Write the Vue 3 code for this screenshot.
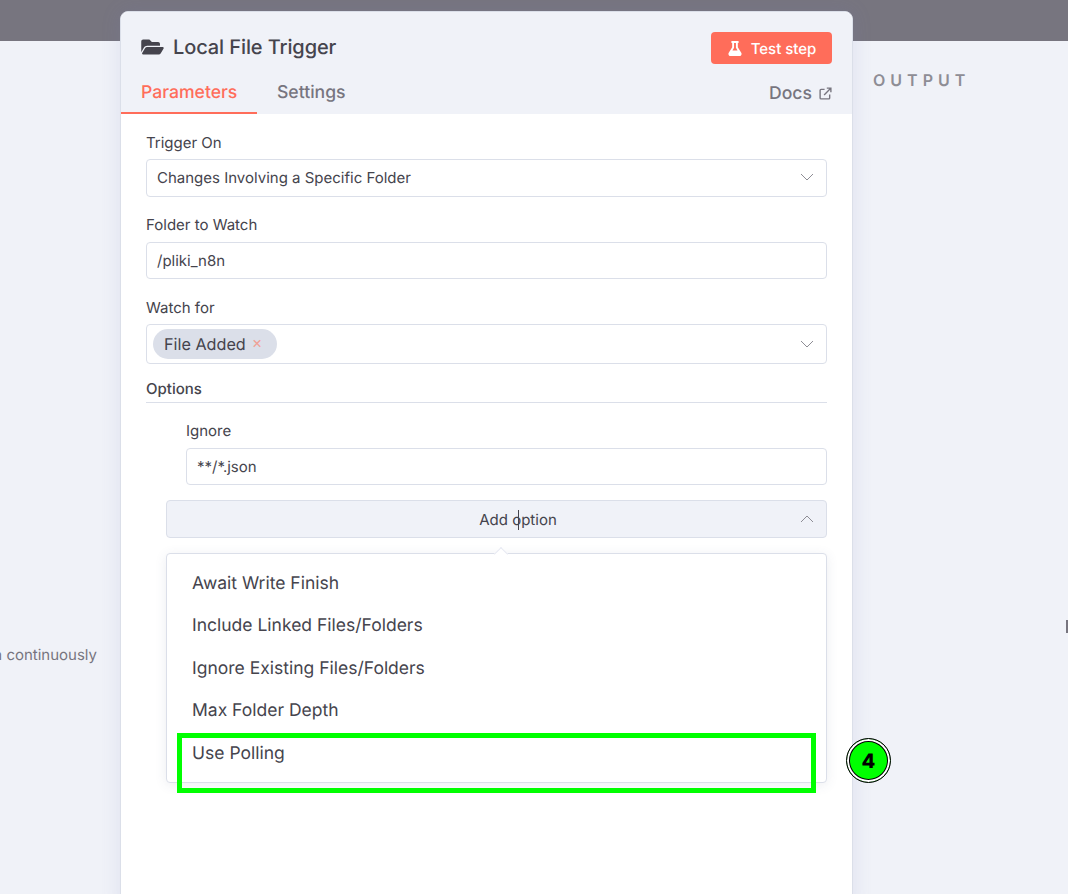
<template>
  <div class="page">
    <div class="topbar"></div>

    <div class="side side-left">
      <span class="hint">n continuously</span>
    </div>

    <div class="panel">
      <div class="panel-head">
        <div class="title-row">
          <div class="title">
            <svg class="folder" viewBox="0 0 576 512" fill="currentColor">
              <path d="M572.694 292.093L500.27 416.248A63.997 63.997 0 0 1 444.989 448H45.025c-18.523 0-30.064-20.093-20.731-36.093l72.424-124.155A64 64 0 0 1 152 256h399.964c18.523 0 30.064 20.093 20.73 36.093zM152 224h328v-48c0-26.51-21.49-48-48-48H272l-64-64H48C21.49 64 0 85.49 0 112v278.046l69.077-118.418C86.214 242.25 117.989 224 152 224z" />
            </svg>
            <span>Local File Trigger</span>
          </div>
          <button class="test-btn">
            <svg class="flask" viewBox="0 0 448 512" fill="currentColor">
              <path d="M437.2 403.5L320 215V64h8c13.3 0 24-10.7 24-24V24c0-13.3-10.7-24-24-24H120c-13.3 0-24 10.7-24 24v16c0 13.3 10.7 24 24 24h8v151L10.8 403.5C-18.5 450.6 15.3 512 70.9 512h306.2c55.7 0 89.4-61.5 60.1-108.5zM137.9 320l48.2-77.6c3.7-5.2 5.8-11.6 5.8-18.4V64h64v160c0 6.9 2.2 13.2 5.8 18.4l48.2 77.6h-172z" />
            </svg>
            Test step
          </button>
        </div>
        <div class="tabs">
          <div class="tab tab--active">Parameters</div>
          <div class="tab">Settings</div>
          <div class="docs">
            Docs
            <svg class="ext" viewBox="0 0 14 14" fill="none" stroke="currentColor" stroke-width="1.5">
              <path d="M6 2.5H2.2a1 1 0 0 0-1 1v8.3a1 1 0 0 0 1 1h8.3a1 1 0 0 0 1-1V8" />
              <path d="M5.5 8.5L12.6 1.4M8.4 1.2h4.4v4.4" />
            </svg>
          </div>
        </div>
      </div>

      <div class="panel-body">
        <label class="label l-trigger">Trigger On</label>
        <div class="field field--select f-trigger">
          <span>Changes Involving a Specific Folder</span>
          <svg class="chev" viewBox="0 0 14 8" fill="none" stroke="currentColor"><path d="M1 1l6 6 6-6" /></svg>
        </div>

        <label class="label l-folder">Folder to Watch</label>
        <div class="field f-folder">/pliki_n8n</div>

        <label class="label l-watch">Watch for</label>
        <div class="field field--select f-watch">
          <span class="tag">File Added <i class="tag-x">×</i></span>
          <svg class="chev" viewBox="0 0 14 8" fill="none" stroke="currentColor"><path d="M1 1l6 6 6-6" /></svg>
        </div>

        <div class="options-head">Options</div>

        <div class="option-block">
          <label class="label">Ignore</label>
          <div class="field f-folder">**/*.json</div>
        </div>

        <div class="add-option">
          <span>Add option</span>
          <svg class="chev chev--up" viewBox="0 0 14 8" fill="none" stroke="currentColor"><path d="M1 7l6-6 6 6" /></svg>
          <i class="caret-line"></i>
        </div>

        <div class="dropdown">
          <i class="arrow"></i>
          <div v-for="item in optionItems" :key="item" class="dd-item">{{ item }}</div>
        </div>
      </div>
    </div>

    <div class="side side-right">
      <div class="output">OUTPUT</div>
      <i class="edge-mark"></i>
    </div>

    <div class="highlight"></div>
    <div class="marker">4</div>
  </div>
</template>

<script setup>
const optionItems = [
  'Await Write Finish',
  'Include Linked Files/Folders',
  'Ignore Existing Files/Folders',
  'Max Folder Depth',
  'Use Polling',
]
</script>

<style>
html,
body {
  margin: 0;
  overflow: hidden;
}
</style>

<style scoped>
.page {
  position: relative;
  display: flex;
  width: 1068px;
  height: 894px;
  overflow: hidden;
  background: #f0f2f8;
  font-family: Inter, "Liberation Sans", sans-serif;
  color: #45444d;
  text-rendering: geometricPrecision;
}

.topbar {
  position: absolute;
  top: 0;
  left: 0;
  right: 0;
  height: 41px;
  background: #77757f;
}

.side {
  position: relative;
}

.side-left {
  width: 120px;
  flex: none;
}

.hint {
  position: absolute;
  top: 646px;
  right: 23px;
  font-size: 15px;
  line-height: 18px;
  white-space: nowrap;
  color: #77757f;
}

.side-right {
  flex: 1;
  padding: 70px 0 0 20px;
}

.output {
  font-size: 16px;
  line-height: 20px;
  font-weight: 600;
  letter-spacing: 5px;
  color: #8e8d95;
}

.edge-mark {
  position: absolute;
  top: 620px;
  right: 0;
  width: 2px;
  height: 13px;
  background: #77757f;
}

/* Panel */
.panel {
  position: relative;
  width: 733px;
  height: 900px;
  flex: none;
  margin-top: 11px;
  box-sizing: border-box;
  border: 1px solid #dbdfe9;
  border-radius: 8px 8px 0 0;
  background: #ffffff;
  box-shadow: 0 0 20px rgba(110, 120, 190, 0.14);
}

.panel-head {
  height: 102px;
  box-sizing: border-box;
  padding: 20px 20px 0 20px;
  background: #f0f2f8;
  border-radius: 8px 8px 0 0;
}

.title-row {
  display: flex;
  justify-content: space-between;
  align-items: flex-start;
  height: 49px;
}

.title {
  display: flex;
  align-items: center;
  gap: 9px;
  height: 30px;
  font-size: 20px;
  font-weight: 500;
  letter-spacing: -0.1px;
  color: #45444d;
}

.folder {
  width: 23px;
  height: 20px;
}

.test-btn {
  display: flex;
  align-items: center;
  justify-content: center;
  gap: 9px;
  width: 121px;
  height: 32px;
  padding: 0 0 0 1px;
  border: none;
  border-radius: 4px;
  background: #ff6d5a;
  color: #ffffff;
  font-family: inherit;
  font-size: 15px;
  font-weight: 500;
  text-rendering: geometricPrecision;
}

.flask {
  width: 14px;
  height: 15px;
}

.tabs {
  display: flex;
  align-items: flex-start;
  margin-left: -20px;
}

.tab {
  height: 31px;
  padding: 0 20px;
  font-size: 17.6px;
  line-height: 24px;
  font-weight: 500;
  color: #77757f;
}

.tab--active {
  width: 96px;
  color: #ff6d5a;
  border-bottom: 2px solid #ff6d5a;
}

.docs {
  display: flex;
  align-items: center;
  gap: 7px;
  margin-left: auto;
  height: 24px;
  font-size: 17.6px;
  font-weight: 500;
  color: #77757f;
}

.ext {
  width: 13px;
  height: 13px;
  margin-top: 1px;
}

.panel-body {
  padding: 0 25px;
}

.label {
  display: block;
  height: 18px;
  font-size: 15px;
  line-height: 18px;
  color: #45444d;
}

.l-trigger {
  padding-top: 20px;
  margin-bottom: 7px;
}

.l-folder {
  margin-top: 19px;
  margin-bottom: 8px;
}

.l-watch {
  margin-top: 20px;
  margin-bottom: 7px;
}

.field {
  display: flex;
  align-items: center;
  box-sizing: border-box;
  height: 37px;
  padding: 0 10px;
  border: 1px solid #dbdfe9;
  border-radius: 4px;
  background: #ffffff;
  font-size: 15px;
  color: #45444d;
}

.field--select {
  justify-content: space-between;
  padding-right: 12px;
}

.f-trigger {
  height: 38px;
  padding-bottom: 2px;
}

.f-watch {
  height: 40px;
  padding-left: 6px;
  padding-bottom: 0;
}

.chev {
  width: 14px;
  height: 8px;
  color: #8e8d95;
}

.tag {
  display: inline-flex;
  align-items: center;
  height: 30px;
  padding: 0 15px 0 11px;
  border-radius: 15px;
  background: #dbdfe9;
  font-size: 16.2px;
  color: #45444d;
}

.tag-x {
  margin: -5px 0 0 6px;
  font-style: normal;
  font-size: 16px;
  color: #f0a196;
}

.options-head {
  margin-top: 16px;
  height: 23px;
  box-sizing: border-box;
  border-bottom: 1px solid #dbdfe9;
  font-size: 15px;
  line-height: 18px;
  font-weight: 500;
}

.option-block {
  padding: 19px 0 0 40px;
}

.option-block .label {
  margin-bottom: 8px;
}

.add-option {
  position: relative;
  display: flex;
  align-items: center;
  justify-content: center;
  box-sizing: border-box;
  height: 38px;
  margin: 15px 0 0 20px;
  padding-left: 43px;
  border: 1px solid #dbdfe9;
  border-radius: 4px;
  background: #f0f2f8;
  font-size: 15px;
}

.chev--up {
  position: absolute;
  right: 12px;
  top: 14px;
}

.caret-line {
  position: absolute;
  left: 351px;
  top: 9px;
  width: 1px;
  height: 20px;
  background: #45444d;
}

/* Dropdown */
.dropdown {
  position: relative;
  box-sizing: border-box;
  height: 230px;
  margin: 15px 0 0 20px;
  padding: 7.9px 0 0 25px;
  border: 1px solid #dbdfe9;
  border-radius: 4px;
  background: #ffffff;
  box-shadow: 0 2px 12px rgba(70, 80, 120, 0.1);
}

.arrow {
  position: absolute;
  top: -5px;
  left: 329px;
  width: 9px;
  height: 9px;
  background: #ffffff;
  border-top: 1px solid #e7e9f2;
  border-left: 1px solid #e7e9f2;
  transform: rotate(45deg);
}

.dd-item {
  height: 42.5px;
  font-size: 17.5px;
  line-height: 44px;
  color: #45444d;
}

/* Annotation */
.highlight {
  position: absolute;
  left: 177px;
  top: 733px;
  width: 629px;
  height: 50px;
  border: 5px solid #00ff00;
}

.marker {
  position: absolute;
  left: 846px;
  top: 738px;
  display: flex;
  align-items: center;
  justify-content: center;
  box-sizing: border-box;
  width: 45px;
  height: 45px;
  border-radius: 50%;
  background: #00ff00;
  border: 1px solid #000000;
  box-shadow: inset 0 0 0 2px #ffffff, inset 0 0 0 3px #000000;
  font-size: 20px;
  font-weight: 800;
  color: #000000;
}
</style>
